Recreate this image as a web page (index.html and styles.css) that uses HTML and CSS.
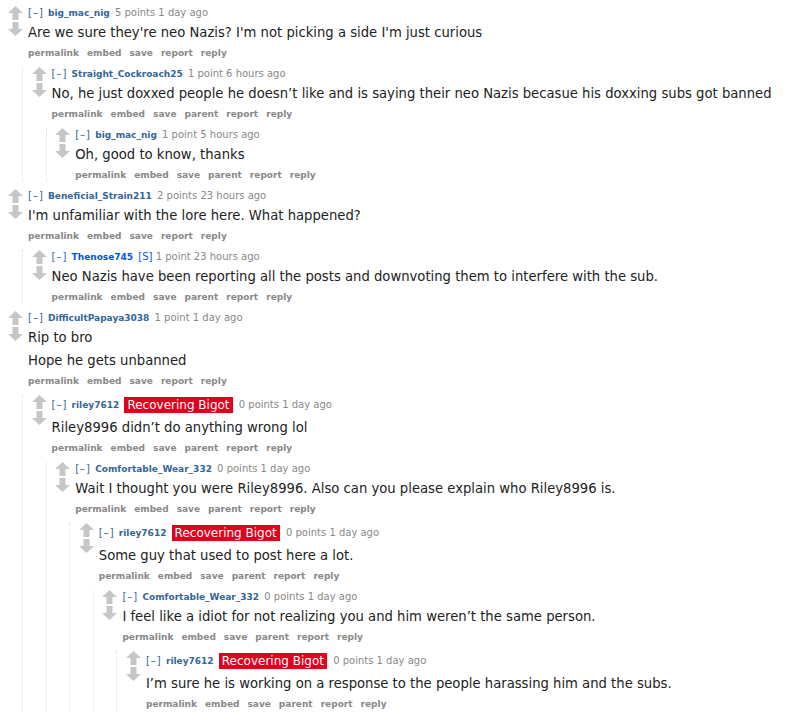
FILE: index.html
```html
<!DOCTYPE html>
<html lang="en">
<head>
    <meta charset="UTF-8">
    <title>comments</title>
    <link rel="stylesheet" href="styles.css">
</head>
<body>
    <div class="commentarea">

        <div class="comment">
            <div class="row">
                <div class="midcol">
                    <svg class="arrow" viewBox="0 0 15 14"><polygon points="7.5,0 15,7 10.5,7 10.5,14 4.5,14 4.5,7 0,7"/></svg>
                    <svg class="arrow down" viewBox="0 0 15 14"><polygon points="7.5,14 15,7 10.5,7 10.5,0 4.5,0 4.5,7 0,7"/></svg>
                </div>
                <div class="entry">
                    <p class="tagline"><a class="expand">[&ndash;]</a> <a class="author">big_mac_nig</a> <span class="score">5 points</span> 1 day ago</p>
                    <div class="md"><p>Are we sure they're neo Nazis? I'm not picking a side I'm just curious</p></div>
                    <ul class="buttons"><li>permalink</li><li>embed</li><li>save</li><li>report</li><li>reply</li></ul>
                </div>
            </div>
            <div class="child">
                <div class="comment">
                    <div class="row">
                        <div class="midcol">
                            <svg class="arrow" viewBox="0 0 15 14"><polygon points="7.5,0 15,7 10.5,7 10.5,14 4.5,14 4.5,7 0,7"/></svg>
                            <svg class="arrow down" viewBox="0 0 15 14"><polygon points="7.5,14 15,7 10.5,7 10.5,0 4.5,0 4.5,7 0,7"/></svg>
                        </div>
                        <div class="entry">
                            <p class="tagline"><a class="expand">[&ndash;]</a> <a class="author">Straight_Cockroach25</a> <span class="score">1 point</span> 6 hours ago</p>
                            <div class="md"><p>No, he just doxxed people he doesn&rsquo;t like and is saying their neo Nazis becasue his doxxing subs got banned</p></div>
                            <ul class="buttons"><li>permalink</li><li>embed</li><li>save</li><li>parent</li><li>report</li><li>reply</li></ul>
                        </div>
                    </div>
                    <div class="child">
                        <div class="comment">
                            <div class="row">
                                <div class="midcol">
                                    <svg class="arrow" viewBox="0 0 15 14"><polygon points="7.5,0 15,7 10.5,7 10.5,14 4.5,14 4.5,7 0,7"/></svg>
                                    <svg class="arrow down" viewBox="0 0 15 14"><polygon points="7.5,14 15,7 10.5,7 10.5,0 4.5,0 4.5,7 0,7"/></svg>
                                </div>
                                <div class="entry">
                                    <p class="tagline"><a class="expand">[&ndash;]</a> <a class="author">big_mac_nig</a> <span class="score">1 point</span> 5 hours ago</p>
                                    <div class="md"><p>Oh, good to know, thanks</p></div>
                                    <ul class="buttons"><li>permalink</li><li>embed</li><li>save</li><li>parent</li><li>report</li><li>reply</li></ul>
                                </div>
                            </div>
                        </div>
                    </div>
                </div>
            </div>
        </div>

        <div class="comment">
            <div class="row">
                <div class="midcol">
                    <svg class="arrow" viewBox="0 0 15 14"><polygon points="7.5,0 15,7 10.5,7 10.5,14 4.5,14 4.5,7 0,7"/></svg>
                    <svg class="arrow down" viewBox="0 0 15 14"><polygon points="7.5,14 15,7 10.5,7 10.5,0 4.5,0 4.5,7 0,7"/></svg>
                </div>
                <div class="entry">
                    <p class="tagline"><a class="expand">[&ndash;]</a> <a class="author">Beneficial_Strain211</a> <span class="score">2 points</span> 23 hours ago</p>
                    <div class="md"><p>I'm unfamiliar with the lore here. What happened?</p></div>
                    <ul class="buttons"><li>permalink</li><li>embed</li><li>save</li><li>report</li><li>reply</li></ul>
                </div>
            </div>
            <div class="child">
                <div class="comment">
                    <div class="row">
                        <div class="midcol">
                            <svg class="arrow" viewBox="0 0 15 14"><polygon points="7.5,0 15,7 10.5,7 10.5,14 4.5,14 4.5,7 0,7"/></svg>
                            <svg class="arrow down" viewBox="0 0 15 14"><polygon points="7.5,14 15,7 10.5,7 10.5,0 4.5,0 4.5,7 0,7"/></svg>
                        </div>
                        <div class="entry">
                            <p class="tagline"><a class="expand">[&ndash;]</a> <a class="author submitter">Thenose745</a> <span class="submitter-tag">[S]</span> <span class="score">1 point</span> 23 hours ago</p>
                            <div class="md"><p>Neo Nazis have been reporting all the posts and downvoting them to interfere with the sub.</p></div>
                            <ul class="buttons"><li>permalink</li><li>embed</li><li>save</li><li>parent</li><li>report</li><li>reply</li></ul>
                        </div>
                    </div>
                </div>
            </div>
        </div>

        <div class="comment">
            <div class="row">
                <div class="midcol">
                    <svg class="arrow" viewBox="0 0 15 14"><polygon points="7.5,0 15,7 10.5,7 10.5,14 4.5,14 4.5,7 0,7"/></svg>
                    <svg class="arrow down" viewBox="0 0 15 14"><polygon points="7.5,14 15,7 10.5,7 10.5,0 4.5,0 4.5,7 0,7"/></svg>
                </div>
                <div class="entry">
                    <p class="tagline"><a class="expand">[&ndash;]</a> <a class="author">DifficultPapaya3038</a> <span class="score">1 point</span> 1 day ago</p>
                    <div class="md"><p>Rip to bro</p><p>Hope he gets unbanned</p></div>
                    <ul class="buttons"><li>permalink</li><li>embed</li><li>save</li><li>report</li><li>reply</li></ul>
                </div>
            </div>
            <div class="child">
                <div class="comment">
                    <div class="row">
                        <div class="midcol">
                            <svg class="arrow" viewBox="0 0 15 14"><polygon points="7.5,0 15,7 10.5,7 10.5,14 4.5,14 4.5,7 0,7"/></svg>
                            <svg class="arrow down" viewBox="0 0 15 14"><polygon points="7.5,14 15,7 10.5,7 10.5,0 4.5,0 4.5,7 0,7"/></svg>
                        </div>
                        <div class="entry">
                            <p class="tagline"><a class="expand">[&ndash;]</a> <a class="author">riley7612</a> <span class="flair">Recovering Bigot</span> <span class="score">0 points</span> 1 day ago</p>
                            <div class="md"><p>Riley8996 didn&rsquo;t do anything wrong lol</p></div>
                            <ul class="buttons"><li>permalink</li><li>embed</li><li>save</li><li>parent</li><li>report</li><li>reply</li></ul>
                        </div>
                    </div>
                    <div class="child">
                        <div class="comment">
                            <div class="row">
                                <div class="midcol">
                                    <svg class="arrow" viewBox="0 0 15 14"><polygon points="7.5,0 15,7 10.5,7 10.5,14 4.5,14 4.5,7 0,7"/></svg>
                                    <svg class="arrow down" viewBox="0 0 15 14"><polygon points="7.5,14 15,7 10.5,7 10.5,0 4.5,0 4.5,7 0,7"/></svg>
                                </div>
                                <div class="entry">
                                    <p class="tagline"><a class="expand">[&ndash;]</a> <a class="author">Comfortable_Wear_332</a> <span class="score">0 points</span> 1 day ago</p>
                                    <div class="md"><p>Wait I thought you were Riley8996. Also can you please explain who Riley8996 is.</p></div>
                                    <ul class="buttons"><li>permalink</li><li>embed</li><li>save</li><li>parent</li><li>report</li><li>reply</li></ul>
                                </div>
                            </div>
                            <div class="child">
                                <div class="comment">
                                    <div class="row">
                                        <div class="midcol">
                                            <svg class="arrow" viewBox="0 0 15 14"><polygon points="7.5,0 15,7 10.5,7 10.5,14 4.5,14 4.5,7 0,7"/></svg>
                                            <svg class="arrow down" viewBox="0 0 15 14"><polygon points="7.5,14 15,7 10.5,7 10.5,0 4.5,0 4.5,7 0,7"/></svg>
                                        </div>
                                        <div class="entry">
                                            <p class="tagline"><a class="expand">[&ndash;]</a> <a class="author">riley7612</a> <span class="flair">Recovering Bigot</span> <span class="score">0 points</span> 1 day ago</p>
                                            <div class="md"><p>Some guy that used to post here a lot.</p></div>
                                            <ul class="buttons"><li>permalink</li><li>embed</li><li>save</li><li>parent</li><li>report</li><li>reply</li></ul>
                                        </div>
                                    </div>
                                    <div class="child">
                                        <div class="comment">
                                            <div class="row">
                                                <div class="midcol">
                                                    <svg class="arrow" viewBox="0 0 15 14"><polygon points="7.5,0 15,7 10.5,7 10.5,14 4.5,14 4.5,7 0,7"/></svg>
                                                    <svg class="arrow down" viewBox="0 0 15 14"><polygon points="7.5,14 15,7 10.5,7 10.5,0 4.5,0 4.5,7 0,7"/></svg>
                                                </div>
                                                <div class="entry">
                                                    <p class="tagline"><a class="expand">[&ndash;]</a> <a class="author">Comfortable_Wear_332</a> <span class="score">0 points</span> 1 day ago</p>
                                                    <div class="md"><p>I feel like a idiot for not realizing you and him weren&rsquo;t the same person.</p></div>
                                                    <ul class="buttons"><li>permalink</li><li>embed</li><li>save</li><li>parent</li><li>report</li><li>reply</li></ul>
                                                </div>
                                            </div>
                                            <div class="child">
                                                <div class="comment">
                                                    <div class="row">
                                                        <div class="midcol">
                                                            <svg class="arrow" viewBox="0 0 15 14"><polygon points="7.5,0 15,7 10.5,7 10.5,14 4.5,14 4.5,7 0,7"/></svg>
                                                            <svg class="arrow down" viewBox="0 0 15 14"><polygon points="7.5,14 15,7 10.5,7 10.5,0 4.5,0 4.5,7 0,7"/></svg>
                                                        </div>
                                                        <div class="entry">
                                                            <p class="tagline"><a class="expand">[&ndash;]</a> <a class="author">riley7612</a> <span class="flair">Recovering Bigot</span> <span class="score">0 points</span> 1 day ago</p>
                                                            <div class="md"><p>I&rsquo;m sure he is working on a response to the people harassing him and the subs.</p></div>
                                                            <ul class="buttons"><li>permalink</li><li>embed</li><li>save</li><li>parent</li><li>report</li><li>reply</li></ul>
                                                        </div>
                                                    </div>
                                                </div>
                                            </div>
                                        </div>
                                    </div>
                                </div>
                            </div>
                        </div>
                    </div>
                </div>
            </div>
        </div>

    </div>
</body>
</html>
```

FILE: styles.css
```css
body {
    margin: 0;
    padding: 6px 8px;
    background: #fff;
    font-family: "DejaVu Sans", Verdana, sans-serif;
    color: #222;
}
.comment {
    margin-bottom: 7px;
}
.comment:last-child {
    margin-bottom: 0;
}
.row {
    display: flex;
}
.midcol {
    width: 15px;
    margin-right: 5px;
    flex-shrink: 0;
}
.arrow {
    display: block;
    width: 15px;
    height: 14px;
    fill: #c6c6c6;
}
.arrow.down {
    margin-top: 2px;
}
.entry {
    flex: 1;
}
.tagline {
    margin: 0;
    font-size: 10px;
    line-height: 14px;
    color: #888;
}
.tagline a {
    text-decoration: none;
}
.expand {
    color: #369;
    letter-spacing: 1px;
    margin-right: 1px;
}
.author {
    color: #369;
    font-weight: bold;
    font-size: 9px;
    margin-right: 2px;
}
.author.submitter,
.submitter-tag {
    color: #0055df;
}
.flair {
    display: inline-block;
    background: #e3001c;
    color: #fff;
    font-size: 12px;
    line-height: 16px;
    padding: 0 3px;
    vertical-align: middle;
    margin: 2px 3px 2px 0;
}
.md {
    margin-top: 4px;
    font-size: 13.2px;
    line-height: 18px;
}
.md p {
    margin: 0 0 5px;
}
.md p:last-child {
    margin-bottom: 0;
}
.buttons {
    list-style: none;
    margin: 4px 0 0;
    padding: 0;
    display: flex;
    gap: 8px;
    font-size: 9px;
    line-height: 14px;
    font-weight: bold;
    color: #888;
}
.child {
    margin-left: 14px;
    margin-top: 7px;
    border-left: 1px dotted #dde;
    padding-left: 8.6px;
}
```
